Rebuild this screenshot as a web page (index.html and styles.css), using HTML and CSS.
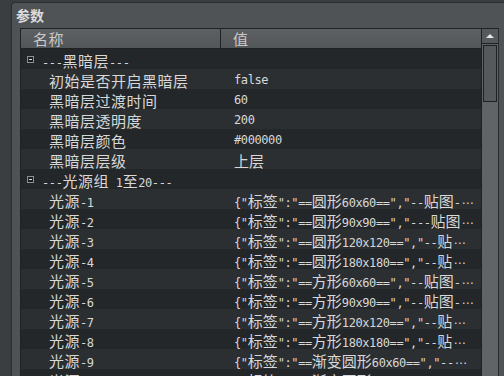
FILE: index.html
```html
<!DOCTYPE html>
<html>
<head>
<meta charset="utf-8">
<link rel="stylesheet" href="styles.css">
</head>
<body>
<div class="group">
  <div class="title">参数</div>
  <div class="frame">
    <div class="table">
      <div class="head">
        <div class="hcell name">名称</div>
        <div class="hcell val">值</div>
      </div>
      <div class="rows">
        <div class="row dark grp"><span class="tog"></span><span class="n">---<span class="c">黑暗层</span>---</span></div>
        <div class="row"><span class="n"><span class="c">初始是否开启黑暗层</span></span><span class="v">false</span></div>
        <div class="row dark"><span class="n"><span class="c">黑暗层过渡时间</span></span><span class="v">60</span></div>
        <div class="row"><span class="n"><span class="c">黑暗层透明度</span></span><span class="v">200</span></div>
        <div class="row dark"><span class="n"><span class="c">黑暗层颜色</span></span><span class="v">#000000</span></div>
        <div class="row"><span class="n"><span class="c">黑暗层层级</span></span><span class="v"><span class="c">上层</span></span></div>
        <div class="row dark grp"><span class="tog"></span><span class="n">---<span class="c">光源组</span> 1<span class="c">至</span>20---</span></div>
        <div class="row"><span class="n"><span class="c">光源</span>-1</span><span class="v">{"<span class="c">标签</span>":"==<span class="c">圆形</span>60x60==","--<span class="c">贴图</span>-<span class="e">⋯</span></span></div>
        <div class="row dark"><span class="n"><span class="c">光源</span>-2</span><span class="v">{"<span class="c">标签</span>":"==<span class="c">圆形</span>90x90==","---<span class="c">贴图</span><span class="e">⋯</span></span></div>
        <div class="row"><span class="n"><span class="c">光源</span>-3</span><span class="v">{"<span class="c">标签</span>":"==<span class="c">圆形</span>120x120==","--<span class="c">贴</span><span class="e">⋯</span></span></div>
        <div class="row dark"><span class="n"><span class="c">光源</span>-4</span><span class="v">{"<span class="c">标签</span>":"==<span class="c">圆形</span>180x180==","--<span class="c">贴</span><span class="e">⋯</span></span></div>
        <div class="row"><span class="n"><span class="c">光源</span>-5</span><span class="v">{"<span class="c">标签</span>":"==<span class="c">方形</span>60x60==","--<span class="c">贴图</span>-<span class="e">⋯</span></span></div>
        <div class="row dark"><span class="n"><span class="c">光源</span>-6</span><span class="v">{"<span class="c">标签</span>":"==<span class="c">方形</span>90x90==","--<span class="c">贴图</span>-<span class="e">⋯</span></span></div>
        <div class="row"><span class="n"><span class="c">光源</span>-7</span><span class="v">{"<span class="c">标签</span>":"==<span class="c">方形</span>120x120==","--<span class="c">贴</span><span class="e">⋯</span></span></div>
        <div class="row dark"><span class="n"><span class="c">光源</span>-8</span><span class="v">{"<span class="c">标签</span>":"==<span class="c">方形</span>180x180==","--<span class="c">贴</span><span class="e">⋯</span></span></div>
        <div class="row"><span class="n"><span class="c">光源</span>-9</span><span class="v">{"<span class="c">标签</span>":"==<span class="c">渐变圆形</span>60x60==","--<span class="e">⋯</span></span></div>
        <div class="row dark"><span class="n"><span class="c">光源</span>-10</span><span class="v">{"<span class="c">标签</span>":"==<span class="c">渐变圆形</span>90x90==","--<span class="e">⋯</span></span></div>
      </div>
    </div>
    <div class="scroll">
      <div class="up"><svg width="8" height="4" viewBox="0 0 8 4"><path d="M0 4 L4 0 L8 4 Z" fill="#e8e8e8"/></svg></div>
      <div class="track"><div class="thumb"></div></div>
    </div>
  </div>
</div>
</body>
</html>
```

FILE: styles.css
```css
html, body {
  margin: 0;
  padding: 0;
}
body {
  width: 504px;
  height: 376px;
  overflow: hidden;
  background: #3b3e40;
  font-family: "DejaVu Sans Mono", "Noto Sans CJK SC", monospace;
  color: #d8d8d8;
}
.group {
  margin: 2px 0 0 11px;
  height: 400px;
  border: 1px solid #2a2c2e;
  border-right: none;
  border-radius: 4px 0 0 0;
  background: #505356;
  box-sizing: border-box;
}
.title {
  height: 25px;
  padding-left: 4px;
  font-family: "Noto Sans CJK SC", sans-serif;
  font-size: 14px;
  font-weight: bold;
  line-height: 25px;
  color: #dcdcdc;
}
.frame {
  display: flex;
  margin-left: 8px;
  margin-right: 5px;
}
.table {
  width: 462px;
  border-top: 1px solid #1f2123;
  border-left: 1px solid #1f2123;
  border-right: 1px solid #1f2123;
  box-sizing: border-box;
  background: #24272a;
}
.head {
  display: flex;
  height: 20px;
  border-bottom: 1px solid #1f2123;
  box-sizing: border-box;
  background: linear-gradient(#5d6063, #54575a);
}
.hcell {
  font-family: "Noto Sans CJK SC", sans-serif;
  font-size: 15px;
  line-height: 19px;
  color: #c9c9c9;
  box-sizing: border-box;
}
.hcell.name {
  width: 200px;
  padding-left: 12px;
  letter-spacing: 0.5px;
  border-right: 1px solid #1f2123;
}
.hcell.val {
  padding-left: 12px;
}
.row {
  display: flex;
  align-items: center;
  height: 20px;
  overflow: hidden;
  background: #2c2f32;
  font-size: 12px;
  letter-spacing: -0.4px;
  white-space: nowrap;
}
.row.dark {
  background: #24272a;
}
.n {
  width: 200px;
  padding-left: 28px;
  box-sizing: border-box;
  flex: none;
  padding-top: 2px;
}
.grp .n {
  width: auto;
  padding-left: 8px;
}
.tog {
  width: 7px;
  height: 7px;
  margin-left: 6px;
  box-sizing: border-box;
  border: 1px solid #8c8e90;
  background: #1b1d1f;
  position: relative;
  flex: none;
}
.tog::after {
  content: "";
  position: absolute;
  left: 1px;
  top: 2px;
  width: 3px;
  height: 1px;
  background: #e0e0e0;
}
.v {
  padding-left: 13px;
  padding-top: 2px;
  flex: none;
}
.c {
  font-family: "Noto Sans CJK SC", sans-serif;
  font-size: 15px;
  letter-spacing: 0.5px;
}
.v .c {
  letter-spacing: 0;
}
.e {
  font-family: "DejaVu Sans", sans-serif;
  font-size: 12px;
  letter-spacing: 0;
  margin-left: 1px;
}
.scroll {
  width: 16px;
  flex: none;
  display: flex;
  flex-direction: column;
  border-right: 1px solid #2a2c2e;
  height: 360px;
}
.up {
  height: 16px;
  background: #56595c;
  border-top: 1px solid #1f2123;
  border-bottom: 1px solid #1f2123;
  box-sizing: border-box;
  display: flex;
  align-items: center;
  justify-content: center;
}
.track {
  flex: 1;
  background: #606467;
  padding: 1px 0 0 1px;
}
.thumb {
  width: 14px;
  height: 57px;
  box-sizing: border-box;
  border: 1px solid #1e2022;
  background: #56595c;
}
```
